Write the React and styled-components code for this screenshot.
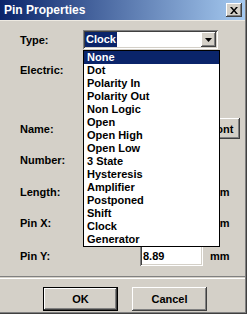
import React from 'react';
import styled, {createGlobalStyle} from 'styled-components';

const GlobalStyle = createGlobalStyle`
  html, body {
    margin: 0;
    padding: 0;
    background: #d4d0c8;
  }
  body {
    font-family: "Liberation Sans", Arial, sans-serif;
    font-size: 11px;
    font-weight: bold;
    color: #000;
  }
`;

const Window = styled.div`
  position: relative;
  width: 247px;
  height: 314px;
  box-sizing: border-box;
  background: #d4d0c8;
  box-shadow: inset -1px -1px #404040, inset -2px -2px #808080;
  display: flex;
  flex-direction: column;
  overflow: hidden;
`;

const TitleBar = styled.div`
  height: 20px;
  margin-right: 2px;
  background: linear-gradient(to right, #0a246a, #a6caf0);
  display: flex;
  align-items: center;
  justify-content: space-between;
  padding: 0 3px 0 4px;
  border-bottom: 1px solid #eeeae2;
`;

const Title = styled.span`
  color: #fff;
  font-size: 12px;
  font-weight: bold;
`;

const CloseButton = styled.div`
  width: 16px;
  height: 14px;
  box-sizing: border-box;
  background: #d4d0c8;
  box-shadow: inset -1px -1px #404040, inset 1px 1px #fff, inset -2px -2px #808080;
  display: flex;
  align-items: center;
  justify-content: center;
`;

const Form = styled.div`
  display: flex;
  flex-direction: column;
  padding-left: 20px;
`;

const Row = styled.div`
  display: flex;
  align-items: center;
  height: ${p => p.$h}px;
  margin-top: ${p => p.$mt}px;
`;

const Label = styled.div`
  width: ${p => p.$w || 63}px;
  flex: none;
`;

const Sunken = styled.div`
  box-sizing: border-box;
  background: #fff;
  box-shadow: inset 1px 1px #808080, inset -1px -1px #fff, inset 2px 2px #404040, inset -2px -2px #d4d0c8;
  height: ${p => p.$h || 21}px;
  width: ${p => p.$w}px;
  display: flex;
  align-items: center;
  padding: 0 3px;
  flex: none;
`;

const Combo = styled(Sunken)`
  padding: 2px;
  justify-content: space-between;
`;

const Selected = styled.span`
  background: #0a246a;
  color: #fff;
  padding: 0 1px;
  line-height: 15px;
`;

const ArrowButton = styled.div`
  width: 15px;
  height: 15px;
  box-sizing: border-box;
  background: #d4d0c8;
  box-shadow: inset -1px -1px #404040, inset 1px 1px #fff, inset -2px -2px #808080;
  display: flex;
  align-items: center;
  justify-content: center;
`;

const Unit = styled.span`
  margin-left: 7px;
`;

const PushButton = styled.button`
  font: inherit;
  color: #000;
  width: ${p => p.$w}px;
  height: ${p => p.$h}px;
  margin-left: ${p => p.$ml || 0}px;
  background: #d4d0c8;
  border: ${p => (p.$default ? '1px solid #000' : 'none')};
  box-sizing: border-box;
  box-shadow: inset -1px -1px #404040, inset 1px 1px #fff, inset -2px -2px #808080;
  padding: 0;
  flex: none;
`;

const Separator = styled.div`
  height: 1px;
  margin-top: 10px;
  margin-right: 2px;
  border-top: 1px solid #808080;
  border-bottom: 1px solid #fff;
`;

const ButtonRow = styled.div`
  display: flex;
  padding-left: 43px;
  margin-top: 8px;
  gap: 14px;
`;

const DropList = styled.ul`
  position: absolute;
  left: 83px;
  top: 50px;
  width: 137px;
  margin: 0;
  padding: 0;
  list-style: none;
  box-sizing: border-box;
  background: #fff;
  border: 1px solid #000;
`;

const Item = styled.li`
  height: 13px;
  line-height: 13px;
  padding-left: 3px;
  white-space: nowrap;
  background: ${p => (p.$active ? '#0a246a' : 'transparent')};
  color: ${p => (p.$active ? '#fff' : '#000')};
`;

const types = [
  'None', 'Dot', 'Polarity In', 'Polarity Out', 'Non Logic', 'Open', 'Open High',
  'Open Low', '3 State', 'Hysteresis', 'Amplifier', 'Postponed', 'Shift', 'Clock', 'Generator',
];

const App = () => {
  return (
    <Window>
      <GlobalStyle />
      <TitleBar>
        <Title>Pin Properties</Title>
        <CloseButton>
          <svg width="8" height="7" viewBox="0 0 8 7">
            <path d="M0 0h2l2 2.5L6 0h2L5 3.5 8 7H6L4 4.5 2 7H0l3-3.5z" fill="#000" />
          </svg>
        </CloseButton>
      </TitleBar>
      <Form>
        <Row $h={19} $mt={9}>
          <Label>Type:</Label>
          <Combo $w={135} $h={19}>
            <Selected>Clock</Selected>
            <ArrowButton>
              <svg width="7" height="4" viewBox="0 0 7 4">
                <path d="M0 0h7L3.5 4z" fill="#000" />
              </svg>
            </ArrowButton>
          </Combo>
        </Row>
        <Row $h={19} $mt={11}>
          <Label>Electric:</Label>
          <Combo $w={135} $h={19} />
        </Row>
        <Row $h={21} $mt={39}>
          <Label>Name:</Label>
          <Sunken $w={115} />
          <PushButton $w={37} $h={21} $ml={5}>Font</PushButton>
        </Row>
        <Row $h={21} $mt={10}>
          <Label>Number:</Label>
          <Sunken $w={60} />
        </Row>
        <Row $h={21} $mt={11}>
          <Label $w={120}>Length:</Label>
          <Sunken $w={63} />
          <Unit>mm</Unit>
        </Row>
        <Row $h={21} $mt={10}>
          <Label $w={120}>Pin X:</Label>
          <Sunken $w={63} />
          <Unit>mm</Unit>
        </Row>
        <Row $h={21} $mt={12}>
          <Label $w={120}>Pin Y:</Label>
          <Sunken $w={63}>8.89</Sunken>
          <Unit>mm</Unit>
        </Row>
      </Form>
      <Separator />
      <ButtonRow>
        <PushButton $w={75} $h={24} $default>OK</PushButton>
        <PushButton $w={75} $h={24}>Cancel</PushButton>
      </ButtonRow>
      <DropList>
        {types.map((t, i) => (
          <Item key={t} $active={i === 0}>{t}</Item>
        ))}
      </DropList>
    </Window>
  );
};

export default App;
